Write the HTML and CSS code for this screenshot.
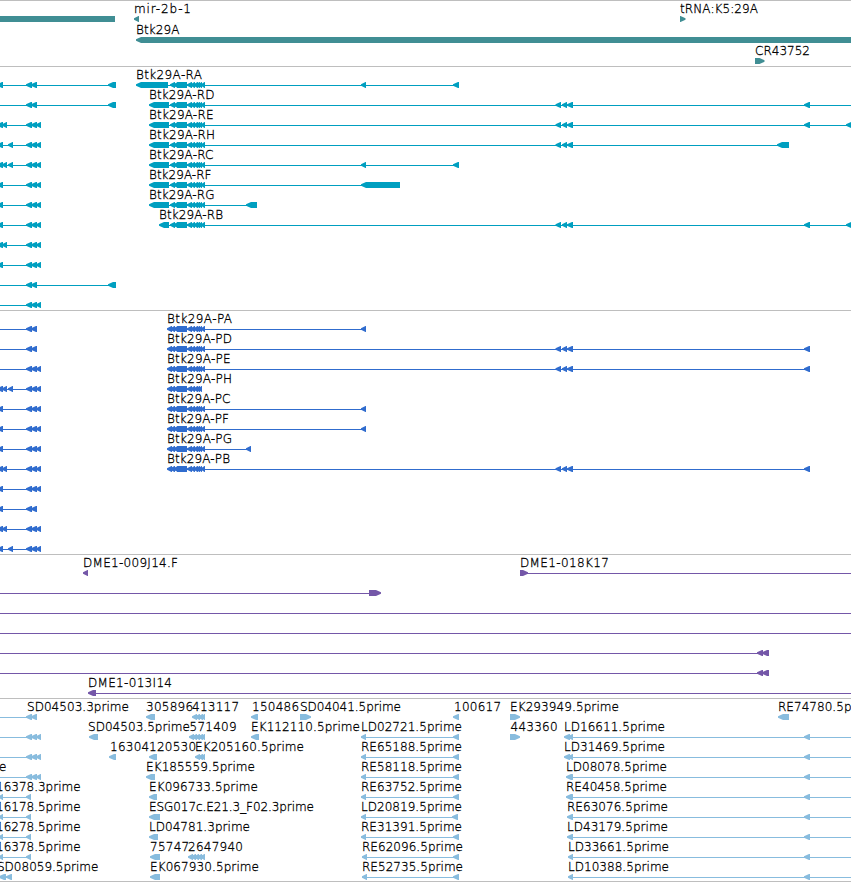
FILE: index.html
```
<!doctype html>
<html lang="en">
<head>
	<meta charset="UTF-8">
	<title>Btk29A</title>
	<link rel="stylesheet" href="styles.css">
</head>
<body>
	<div class="browser">
		<div class="track track-gene"><svg id="gene" width="851" height="65"></svg></div>
		<div class="track track-transcript"><svg id="transcript" width="851" height="243"></svg></div>
		<div class="track track-protein"><svg id="protein" width="851" height="243"></svg></div>
		<div class="track track-bac"><svg id="bac" width="851" height="143"></svg></div>
		<div class="track track-est"><svg id="est" width="851" height="182"></svg></div>
	</div>
	<script src="tracks.js"></script>
</body>
</html>
```

FILE: styles.css
```
*{margin: 0;padding: 0;}
body{background: #fff;overflow: hidden;}
.browser{width: 851px;border-bottom: 1px solid #bebebe;}
.track{border-top: 1px solid #bebebe;overflow: hidden;}
.track svg{display: block;}
.track text{font: 200 12px "DejaVu Sans", sans-serif;fill: #000;stroke: #000;stroke-width: .3px;}

.track-gene{fill: #408e94;}
.track-transcript{fill: #009fc0;}
.track-protein{fill: #306cce;}
.track-bac{fill: #7457a8;}
.track-est{fill: #88bcde;}
```

FILE: tracks.js
```
var NS='http://www.w3.org/2000/svg';

// label widths in px
var widths={
	'mir-2b-1':57,'tRNA:K5:29A':78,'Btk29A':43.5,'CR43752':55,
	'Btk29A-RA':66,'Btk29A-RD':65.5,'Btk29A-RE':64.5,'Btk29A-RH':66,'Btk29A-RC':64.5,'Btk29A-RF':62.5,'Btk29A-RG':65.5,'Btk29A-RB':64,
	'Btk29A-PA':65,'Btk29A-PD':65,'Btk29A-PE':63.5,'Btk29A-PH':65,'Btk29A-PC':63.5,'Btk29A-PF':62,'Btk29A-PG':65,'Btk29A-PB':63,
	'DME1-009J14.F':95,'DME1-018K17':89,'DME1-013I14':84,
	'SD04503.3prime':102,'SD04503.5prime':102,'SD04041.5prime':101,
	'ESG017c.E21.3_F02.3prime':165,'EK205160.5prime':109,'EK185559.5prime':109,'EK096733.5prime':109,
	'EK067930.5prime':109,'EK112110.5prime':109,'EK293949.5prime':109
};

function add(svg,tag,attrs,text){
	var el=document.createElementNS(NS,tag);
	for (var k in attrs) { el.setAttribute(k,attrs[k]); }
	if (text) { el.textContent=text; }
	svg.appendChild(el);
}

function labelWidth(t){
	if (widths[t]) { return widths[t]; }
	if (/^\d+$/.test(t)) { return t.length*7.85; }
	if (/^(LD|RE)/.test(t)) { return 101; }
	return 0;
}

// feature: [from, to, strand], strand is '<' (default), '>' or '-' for a plain box
function feature(svg,f,y){
	var a=f[0],b=f[1],s=f[2]||'<';
	var h=Math.min(5,b-a-.5);
	var d;
	if (s=='-') { d='M'+a+' '+y+'H'+b+'v6H'+a+'z'; }
	else if (s=='>') { d='M'+a+' '+y+'H'+(b-h)+'L'+b+' '+(y+2.2)+'v1.6L'+(b-h)+' '+(y+6)+'H'+a+'z'; }
	else { d='M'+a+' '+(y+2.2)+'L'+(a+h)+' '+y+'H'+b+'v6H'+(a+h)+'L'+a+' '+(y+3.8)+'z'; }
	add(svg,'path',{d:d});
}

// row: groups of {t: label, x: label x, l: [from, to] intron line, f: features}
function draw(id,rows,top,step){
	var svg=document.getElementById(id);
	rows.forEach(function(row,i){
		var y=top+i*step;
		row.forEach(function(g){
			if (g.l) { add(svg,'rect',{x:g.l[0],y:y+3,width:g.l[1]-g.l[0],height:1}); }
			(g.f||[]).forEach(function(f){ feature(svg,f,y); });
			if (g.t) {
				var attrs={x:g.x,y:y-3};
				var w=labelWidth(g.t);
				if (w) { attrs.textLength=w; }
				add(svg,'text',attrs,g.t);
			}
		});
	});
}

var A=[-3,3], B=[2,7], C=[8,13];
var two=[[26,32],[31,37]];
var three=[[26,32],[31,37],[36,41]];
var far=[[555.5,561],[562,567],[567,573],[804,810]];
var tail=[[187,192],[190.5,195],[193.5,198],[196,200],[198.5,202]];
var tailEnd=tail.concat([[201,205]]);

function left(end,f){ return {l:[0,end],f:f}; }
function rna(name,x,end,more){
	var f=[[x,x==136?168:169],[170,175],[173,179],[177,187,'-']].concat(tailEnd,more);
	return {t:'Btk29A-'+name,x:x,l:[x+3,end],f:f};
}
function pep(name,end,more){
	var f=[[167,172],[170,175],[173,179],[177,187,'-']].concat(name=='PH'?tail:tailEnd,more);
	return {t:'Btk29A-'+name,x:167,l:[170,end],f:f};
}
function est(name,x,f,l){ return {t:name,x:x,f:f,l:l}; }
function cluster(from){
	var f=[];
	for (var x=from;x<202;x+=3) { f.push([x,Math.min(x+5,205)]); }
	return f;
}
function pair(name,x,end){
	end=end||459;
	return est(name+'.5prime',x,[[x,x+5],[end-6,end]],[x,end]);
}
function long(name,x){
	var f=[[x,Math.min(x+6,573)],[804,810]];
	if (x<567) { f.push([568,573]); }
	return est(name+'.5prime',x,f,[x+2,851]);
}

draw('gene',[
	[{f:[[0,115,'-']]},{t:'mir-2b-1',x:134,f:[[134,139]]},{t:'tRNA:K5:29A',x:680,f:[[680,685.5,'>']]}],
	[{t:'Btk29A',x:136,f:[[136,860]]}],
	[{t:'CR43752',x:755,f:[[755,764.5,'>']]}]
],15,21);

draw('transcript',[
	[left(116,[A].concat(two,[[108,116]])),rna('RA',136,459,[[361,366],[453,459]])],
	[left(116,two.concat([[108,116]])),rna('RD',149,851,far)],
	[left(41,[A,B].concat(three)),rna('RE',149,851,far.concat([[846,852]]))],
	[left(41,[A,C].concat(three)),rna('RH',149,779,far.slice(0,3).concat([[777,789]]))],
	[left(41,[A,B,C].concat(three)),rna('RC',149,459,[[361,366],[453,459]])],
	[left(41,[A].concat(three)),rna('RF',149,362,[[361,400]])],
	[left(41,[A].concat(three)),rna('RG',149,247,[[246,257]])],
	[left(41,[A].concat(three)),rna('RB',159,851,far.concat([[846,852]]))],
	[left(41,[A,B].concat(three))],
	[left(41,[A].concat(three))],
	[left(116,two.concat([[108,116]]))],
	[left(41,three)]
],15,20);

draw('protein',[
	[left(37,two),pep('PA',366,[[361,366]])],
	[left(37,two),pep('PD',810,far)],
	[left(41,three),pep('PE',810,far)],
	[left(41,[A,B,C].concat(three)),pep('PH',200,[])],
	[left(41,[A].concat(three)),pep('PC',366,[[361,366]])],
	[left(41,[A].concat(three)),pep('PF',366,[[361,366]])],
	[left(41,[A].concat(three)),pep('PG',251,[[246,251]])],
	[left(41,[A,B].concat(three)),pep('PB',810,far)],
	[left(41,[A].concat(three))],
	[left(37,[A].concat(two))],
	[left(41,[A,B].concat(three))],
	[left(41,[A,C].concat(three))]
],15,20);

draw('bac',[
	[est('DME1-009J14.F',83,[[83,88]]),est('DME1-018K17',520,[[520,528,'>']],[521,851])],
	[{l:[0,370],f:[[369,381,'>']]}],
	[{l:[0,851]}],
	[{l:[0,851]}],
	[{l:[0,769],f:[[757,763],[762,769]]}],
	[{l:[0,769],f:[[757,763],[762,769]]}],
	[est('DME1-013I14',88,[[88,96]],[90,851])]
],15,20);

draw('est',[
	[left(37,two),est('SD04503.3prime',27),est('305896',146,[[146,155]]),est('413117',192,cluster(192)),
		est('150486',252,[[251,258]]),est('SD04041.5prime',300,[[300,311,'>']]),est('100617',454,[[453,459]]),
		est('EK293949.5prime',510,[[510,520,'>']]),est('RE74780.5prime',778,[[778,789]])],
	[left(41,three),est('SD04503.5prime',88,[[89,98]]),est('571409',189.5,cluster(189)),
		est('EK112110.5prime',251,[[251,259]]),pair('LD02721',361),est('443360',510.5,[[510,520,'>']]),long('LD16611',564)],
	[left(41,three),est('16304',110,[[109,116]]),est('120530',149,[[149,157]]),est('EK205160.5prime',195,cluster(195)),
		pair('RE65188',361),long('LD31469',564)],
	[left(41,three),est('e',-1),est('EK185559.5prime',146,[[146,155]]),pair('RE58118',361),long('LD08078',566)],
	[est('16378.3prime',-4,[[-1,3],[26,31]],[0,31]),est('EK096733.5prime',149,[[149,157]]),pair('RE63752',361),long('RE40458',566)],
	[est('16178.5prime',-4,[[-1,3],[26,31]],[0,31]),est('ESG017c.E21.3_F02.3prime',149,[[149,160]]),pair('LD20819',361,458),long('RE63076',567)],
	[est('16278.5prime',-4,[[-1,3],[26,31]],[0,31]),est('LD04781.3prime',149,[[149,158]]),pair('RE31391',361),long('LD43179',567)],
	[est('16378.5prime',-4,[[-1,3],[26,31]],[0,31]),est('75747',150,[[150,160]]),est('2647940',188,cluster(188)),
		pair('RE62096',362),long('LD33661',568)],
	[est('SD08059.5prime',-3,[[-1,6],[6,12]],[0,12]),est('EK067930.5prime',150,[[150,160]]),pair('RE52735',362),long('LD10388',568)]
],15,20);
```
